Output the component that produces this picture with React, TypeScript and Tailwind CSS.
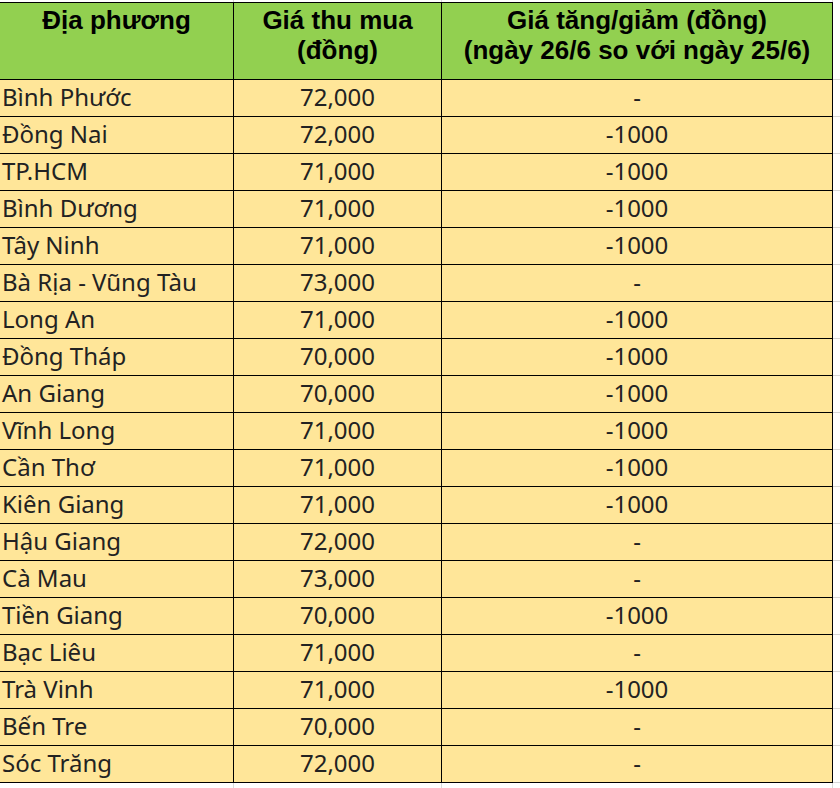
import React from "react";

const rows: [string, string, string][] = [
  ["Bình Phước", "72,000", "-"],
  ["Đồng Nai", "72,000", "-1000"],
  ["TP.HCM", "71,000", "-1000"],
  ["Bình Dương", "71,000", "-1000"],
  ["Tây Ninh", "71,000", "-1000"],
  ["Bà Rịa - Vũng Tàu", "73,000", "-"],
  ["Long An", "71,000", "-1000"],
  ["Đồng Tháp", "70,000", "-1000"],
  ["An Giang", "70,000", "-1000"],
  ["Vĩnh Long", "71,000", "-1000"],
  ["Cần Thơ", "71,000", "-1000"],
  ["Kiên Giang", "71,000", "-1000"],
  ["Hậu Giang", "72,000", "-"],
  ["Cà Mau", "73,000", "-"],
  ["Tiền Giang", "70,000", "-1000"],
  ["Bạc Liêu", "71,000", "-"],
  ["Trà Vinh", "71,000", "-1000"],
  ["Bến Tre", "70,000", "-"],
  ["Sóc Trăng", "72,000", "-"],
];

export default function App() {
  const head =
    "h-[78px] border-t border-b border-r border-black bg-[#92d050] text-center pt-[2px] text-[26px] leading-[30px] font-bold text-black font-['Liberation_Sans',Arial,sans-serif]";
  const cell =
    "h-[37px] border-b border-r border-black bg-[#ffe699] flex items-end pb-[5px] text-[24px] leading-[28px] text-[#222] font-['Noto_Sans',sans-serif]";
  return (
    <div className="w-[840px] h-[788px] bg-white overflow-hidden">
      <div className="grid grid-cols-[234px_208px_391px_7px]">
        <div className="h-[2px] border-r border-[#d9d9d9]" />
        <div className="h-[2px] border-r border-[#d9d9d9]" />
        <div className="h-[2px] border-r border-[#d9d9d9]" />
        <div className="h-[2px]" />

        <div className={head}>Địa phương</div>
        <div className={head}>
          Giá thu mua
          <br />
          (đồng)
        </div>
        <div className={head}>
          Giá tăng/giảm (đồng)
          <br />
          (ngày 26/6 so với ngày 25/6)
        </div>
        <div className="h-[78px] border-b border-[#d9d9d9]" />

        {rows.map(([name, price, diff]) => (
          <React.Fragment key={name}>
            <div className={`${cell} pl-[2px]`}>{name}</div>
            <div className={`${cell} justify-center`}>{price}</div>
            <div className={`${cell} justify-center`}>{diff}</div>
            <div className="h-[37px] border-b border-[#d9d9d9]" />
          </React.Fragment>
        ))}

        <div className="h-[5px] border-r border-[#d9d9d9]" />
        <div className="h-[5px] border-r border-[#d9d9d9]" />
        <div className="h-[5px] border-r border-[#d9d9d9]" />
        <div className="h-[5px]" />
      </div>
    </div>
  );
}
